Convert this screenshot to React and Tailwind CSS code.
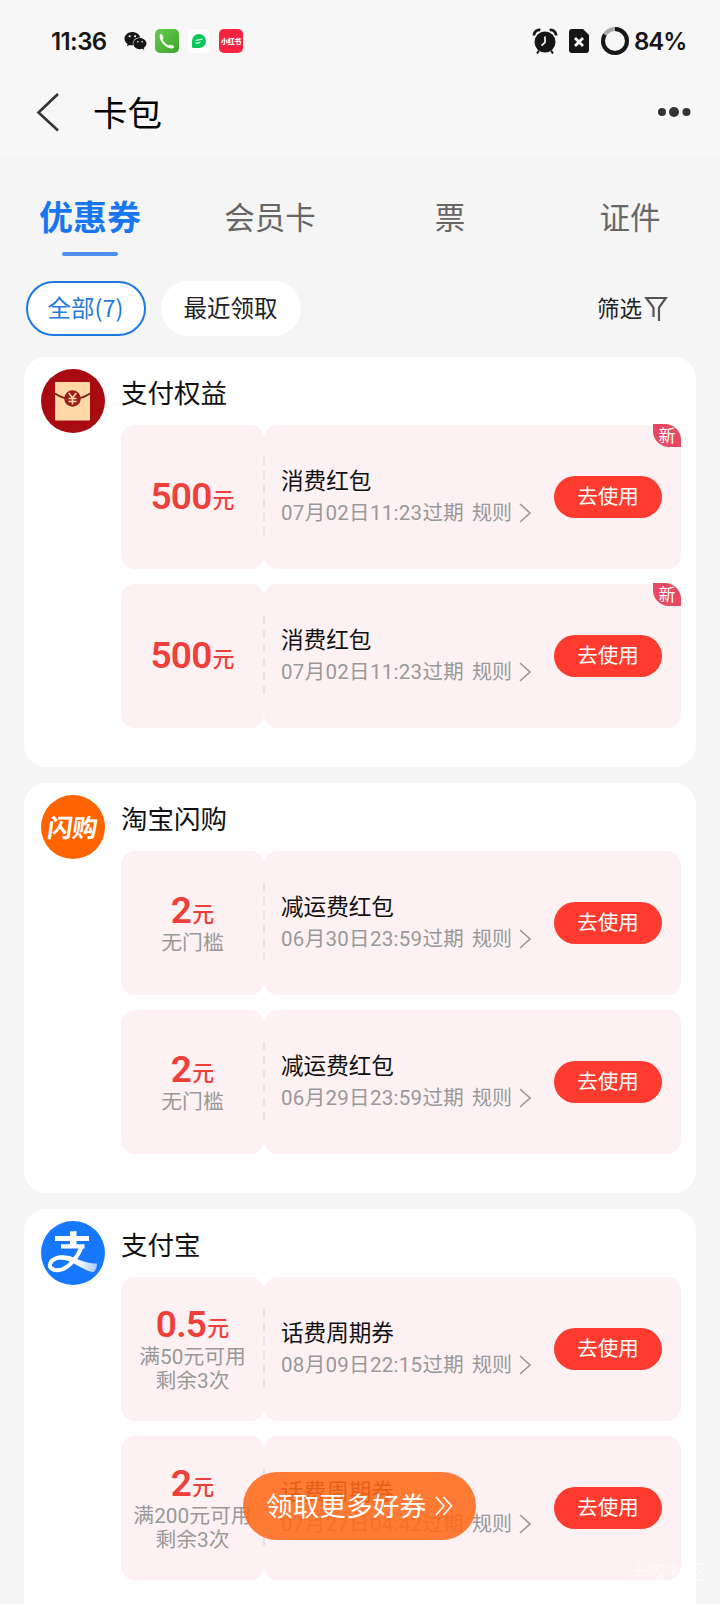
import React, { useState } from 'react';
import { FaWeixin } from 'react-icons/fa';

const tabs = ['优惠券', '会员卡', '票', '证件'];

const shops = [
  {
    name: '支付权益',
    logo: 'envelope',
    coupons: [
      { amount: '500', title: '消费红包', expire: '07月02日11:23过期', isNew: true },
      { amount: '500', title: '消费红包', expire: '07月02日11:23过期', isNew: true },
    ],
  },
  {
    name: '淘宝闪购',
    logo: 'flash',
    coupons: [
      { amount: '2', limits: ['无门槛'], title: '减运费红包', expire: '06月30日23:59过期' },
      { amount: '2', limits: ['无门槛'], title: '减运费红包', expire: '06月29日23:59过期' },
    ],
  },
  {
    name: '支付宝',
    logo: 'alipay',
    coupons: [
      { amount: '0.5', limits: ['满50元可用', '剩余3次'], title: '话费周期券', expire: '08月09日22:15过期' },
      { amount: '2', limits: ['满200元可用', '剩余3次'], title: '话费周期券', expire: '07月27日04:42过期' },
    ],
  },
];

const StatusBar = () => (
  <div className="flex h-[82px] items-center pl-[51px] pr-[34px] font-['Inter','Noto_Sans_CJK_SC',sans-serif] text-[#161616]">
    <span className="w-[73px] pt-px text-[24px] leading-6 font-semibold tracking-[-0.6px]">11:36</span>
    <FaWeixin className="h-[22px] w-[23px] text-[#161616]" />
    {/* phone */}
    <svg className="ml-[8px] h-6 w-6" viewBox="0 0 24 24">
      <defs>
        <linearGradient id="phone" x1="0" y1="0" x2="1" y2="1">
          <stop offset="0" stopColor="#62cf4c" />
          <stop offset="1" stopColor="#41a32f" />
        </linearGradient>
      </defs>
      <rect width="24" height="24" rx="5" fill="url(#phone)" />
      <path
        d="M4.800 6C5 4.900 6.800 4.600 7.300 5.700L8.300 8.600C8.500 9.400 7.900 9.900 7.700 10.600C8.700 13.100 10.800 15.200 13.300 16.300C14.200 16.200 14.700 15.500 15.500 15.700L18.300 16.700C19.200 17.200 19 18.700 18 19.200C16 19.900 13.500 19 11.500 17.700C8.300 15.700 5.600 12.300 4.900 9C4.700 8 4.600 7 4.800 6z"
        fill="#fff"
      />
    </svg>
    {/* messages */}
    <svg className="ml-[8px] h-6 w-6" viewBox="0 0 24 24">
      <rect x="1" y="0" width="22" height="24" rx="5" fill="#fff" />
      <path d="M12 5a7 7 0 0 1 0 14H6.200a1.200 1.200 0 0 1-1.200-1.200V12a7 7 0 0 1 7-7z" fill="#0ac75c" />
      <path d="M8.600 11.500l7-1.300M8.600 14.300l4.800-.9" stroke="#d8f7e4" strokeWidth="1.200" />
    </svg>
    <span className="ml-[8px] flex h-6 w-6 items-center justify-center rounded-[5px] bg-[#f5233f] text-[7px] leading-none font-black tracking-[-0.3px] whitespace-nowrap text-white">
      小红书
    </span>
    <div className="ml-auto flex items-center">
      {/* alarm */}
      <svg className="h-[26px] w-[26px]" viewBox="0 0 26 26">
        <circle cx="13" cy="14" r="10.500" fill="#161616" />
        <path d="M1.800 7.500C2 3.800 5 1.300 8.300 2M24.200 7.500C24 3.800 21 1.300 17.700 2" stroke="#161616" strokeWidth="2.800" fill="none" />
        <path d="M7 22.500L5 25.500M19 22.500l2 3" stroke="#161616" strokeWidth="2" />
        <path d="M13 8.500v6l-3.500 3.200" stroke="#f7f7f7" strokeWidth="1.700" fill="none" />
      </svg>
      {/* sim */}
      <svg className="ml-[11px] h-6 w-5" viewBox="0 0 20 24">
        <path d="M3 0h11l6 6v15a3 3 0 0 1-3 3H3a3 3 0 0 1-3-3V3a3 3 0 0 1 3-3z" fill="#161616" />
        <path d="M6 9l8 8M14 9l-8 8" stroke="#fff" strokeWidth="2.800" />
      </svg>
      {/* battery */}
      <svg className="ml-[12px] h-7 w-7" viewBox="0 0 28 28">
        <circle cx="14" cy="14" r="12" fill="none" stroke="#aaa" strokeWidth="4" />
        <circle
          cx="14"
          cy="14"
          r="12"
          fill="none"
          stroke="#161616"
          strokeWidth="4"
          pathLength="100"
          strokeDasharray="84 100"
          transform="rotate(-90 14 14)"
        />
      </svg>
      <span className="ml-[5px] w-[52px] pt-[2px] text-[24px] leading-6 font-semibold tracking-[-1px]">84%</span>
    </div>
  </div>
);

const NavBar = () => (
  <div className="flex h-[76px] items-start pt-[8px] pl-[36px] pr-[29px]">
    <svg className="mt-[2px] h-[40px] w-6" viewBox="0 0 24 40" fill="none" stroke="#333" strokeWidth="2.600">
      <path d="M22 2L2.500 20.500L22 38.500" />
    </svg>
    <h1 className="ml-[33px] text-[34.500px] leading-[43px] text-black">卡包</h1>
    <svg className="mt-[16px] ml-auto h-3 w-[34px]" viewBox="0 0 34 12" fill="#333">
      <circle cx="5" cy="6" r="4" />
      <circle cx="17" cy="6" r="5" />
      <circle cx="29.500" cy="6" r="4" />
    </svg>
  </div>
);

const ShopLogo = ({ type }) => {
  if (type === 'envelope') {
    return (
      <svg className="h-16 w-16" viewBox="0 0 64 64">
        <circle cx="32" cy="32" r="32" fill="#a80b12" />
        <rect x="14" y="13" width="35" height="38.500" rx="1" fill="#fdd9a6" />
        <path d="M14 24.500Q22 30 31.500 30T49 24.500" fill="none" stroke="#7c1f14" strokeWidth="1.800" />
        <circle cx="31.500" cy="29.500" r="8.300" fill="#9c1c18" />
        <path d="M27.800 24l3.700 5 3.700-5M31.500 29v6.500M27.500 29.500h8M27.500 32.500h8" fill="none" stroke="#fdd9a6" strokeWidth="1.600" />
      </svg>
    );
  }
  if (type === 'flash') {
    return (
      <div className="flex h-16 w-16 items-center justify-center rounded-full bg-[#ff6400]">
        <span className="-skew-x-8 pb-px text-[25px] leading-none font-bold tracking-[-0.300px] whitespace-nowrap text-white">闪购</span>
      </div>
    );
  }
  return (
    <svg className="h-16 w-16" viewBox="0 0 64 64">
      <defs>
        <linearGradient id="tail" x1="0" y1="0" x2="1" y2="0">
          <stop offset="0.500" stopColor="#fff" />
          <stop offset="1" stopColor="#a9cdfc" />
        </linearGradient>
      </defs>
      <circle cx="32" cy="32" r="32" fill="#1677ff" />
      <path d="M14 15h34v5H14zM29 10.500l6.500-.5v14H29zM20 23.200h23.500v4.300H20z" fill="#fff" />
      <path
        d="M40.500 25.500C37 36 27 48.500 17 49.200C10.500 49.500 8 46 9.200 42.600C10.500 38 17 35.500 23.500 37"
        fill="none"
        stroke="#fff"
        strokeWidth="4"
      />
      <path d="M15 35.500C24 32 33 36.500 40 39.500C46 41.800 51 42.800 56 42.500C56 46.500 54.500 50 52 51.200C44 49.500 38 45 31 41.500C25.500 38.800 20 37.500 16 38.500z" fill="url(#tail)" />
    </svg>
  );
};

const Coupon = ({ coupon }) => (
  <div className="relative flex h-[144px]">
    <div className="flex w-[143px] shrink-0 flex-col items-center justify-center rounded-[14px] bg-[#fdf1f3]">
      <div className="flex h-10 items-baseline font-['Roboto','Noto_Sans_CJK_SC',sans-serif] leading-[39px] text-[#ee3f3a]">
        <span className="text-[37px] font-semibold tracking-[-0.8px]">{coupon.amount}</span>
        <span className="relative -top-px ml-px text-[22px] font-medium">元</span>
      </div>
      {coupon.limits?.map((line) => (
        <div key={line} className="font-['Roboto','Noto_Sans_CJK_SC',sans-serif] text-[20.800px] leading-6 whitespace-nowrap text-[#999]">
          {line}
        </div>
      ))}
    </div>
    <div className="flex flex-1 items-center rounded-[14px] bg-[#fdf1f3] pr-[19px] pl-[17px]">
      <div className="pt-[2px]">
        <div className="mb-[3px] text-[22.600px] leading-[28px] text-[#111]">{coupon.title}</div>
        <div className="flex items-center pb-px font-['Roboto','Noto_Sans_CJK_SC',sans-serif] text-[20.500px] leading-[32px] whitespace-nowrap text-[#999]">
          <span className="w-[191px] tracking-[0.300px]">{coupon.expire}</span>
          <span className="text-[20px]">规则</span>
          <svg className="ml-[7px] h-5 w-3" viewBox="0 0 12 20" fill="none" stroke="#999" strokeWidth="1.600">
            <path d="M1 1l10 9-10 9" />
          </svg>
        </div>
      </div>
      <button className="ml-auto h-[42px] w-[108px] rounded-full bg-[#ff3b2f] pb-[4px] text-[20.500px] leading-[36px] text-white">去使用</button>
    </div>
    {/* tear line */}
    <div className="absolute top-8 left-[142px] h-20 w-[2px] bg-[repeating-linear-gradient(to_bottom,#ecdfe2_0px,#ecdfe2_8px,transparent_8px,transparent_14px)]" />
    {coupon.isNew && (
      <span className="absolute -top-px right-0 flex h-[23px] w-7 items-center justify-center rounded-tr-[16px] rounded-bl-[16px] bg-[#e64a60] pb-[3px] text-[17px] leading-none text-white">
        新
      </span>
    )}
  </div>
);

const ShopCard = ({ shop }) => (
  <section className="flex h-[410px] shrink-0 rounded-[22px] bg-white pt-3 pr-[15px] pl-[17px]">
    <ShopLogo type={shop.logo} />
    <div className="ml-4 flex-1">
      <h2 className="mb-2 h-12 text-[26.500px] leading-[45px] text-[#111]">{shop.name}</h2>
      <div className="flex flex-col gap-[15px]">
        {shop.coupons.map((coupon, i) => (
          <Coupon key={i} coupon={coupon} />
        ))}
      </div>
    </div>
  </section>
);

const App = () => {
  const [activeTab, setActiveTab] = useState('优惠券');

  return (
    <div className="relative h-[1604px] w-[720px] overflow-hidden bg-[#f5f5f5] font-['Noto_Sans_CJK_SC',sans-serif]">
      <header className="h-[158px] bg-[#f7f7f7]">
        <StatusBar />
        <NavBar />
      </header>

      <nav className="grid h-[122px] grid-cols-4">
        {tabs.map((tab) => (
          <button key={tab} onClick={() => setActiveTab(tab)} className="flex flex-col items-center pt-[33px]">
            {tab === activeTab ? (
              <>
                <span className="text-[34px] leading-[50px] font-bold text-[#1777f0]">{tab}</span>
                <span className="mt-[11px] h-1 w-14 rounded-full bg-[#4e8ef0]" />
              </>
            ) : (
              <span className="text-[30.500px] leading-[51px] text-[#666]">{tab}</span>
            )}
          </button>
        ))}
      </nav>

      <div className="flex h-[77px] items-start pt-px pl-[26px] pr-[52px]">
        <button className="h-[55px] w-[120px] rounded-full border-2 border-[#1f78e0] bg-white pr-px pb-[3px] text-[23.500px] leading-[47px] text-[#2479dc]">全部(7)</button>
        <button className="ml-[15px] h-[55px] w-[140px] rounded-full bg-white pr-px pb-[3px] text-[23.500px] leading-[50px] text-[#222]">最近领取</button>
        <div className="ml-auto flex h-[55px] items-center">
          <span className="pb-[4px] text-[22.500px] leading-[50px] text-[#222]">筛选</span>
          <svg className="ml-[2px] h-[26px] w-6" viewBox="0 0 24 26" fill="none" stroke="#555" strokeWidth="2.200">
            <path d="M9.500 21V11.500L2.300 2H21.800L15 11.500V25" />
          </svg>
        </div>
      </div>

      <main className="flex flex-col gap-4 px-6">
        {shops.map((shop) => (
          <ShopCard key={shop.name} shop={shop} />
        ))}
      </main>

      <button className="absolute top-[1472px] left-[243px] flex h-[68px] w-[233px] items-center rounded-full bg-[#ff6a1a]/88 pl-[23px] text-[26.700px] text-white">
        <span className="pb-[2px] leading-[62px]">领取更多好券</span>
        <svg className="ml-[9px] h-5 w-[18px]" viewBox="0 0 18 20" fill="none" stroke="#fff" strokeWidth="1.600">
          <path d="M1 1l8 9-8 9M8.500 1l8 9-8 9" />
        </svg>
      </button>
      <span className="absolute top-[1560px] left-[628px] text-[20px] leading-6 whitespace-nowrap text-white/50">卡农社区</span>
    </div>
  );
};

export default App;
